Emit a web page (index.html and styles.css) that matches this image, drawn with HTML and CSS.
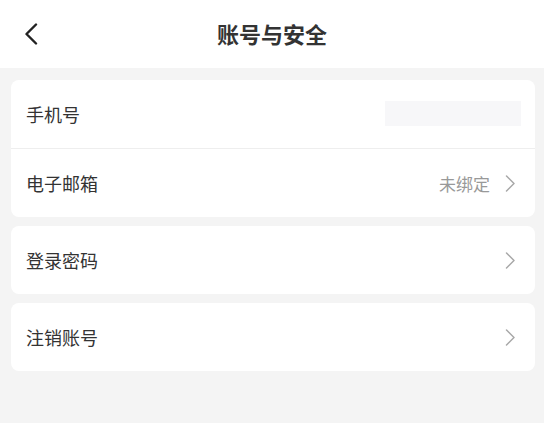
FILE: index.html
```html
<!DOCTYPE html>
<html lang="zh-CN">
<head>
<meta charset="utf-8">
<title>账号与安全</title>
<link rel="stylesheet" href="styles.css">
</head>
<body>
<div class="page">
  <header class="nav">
    <span class="back">
      <svg width="14" height="22" viewBox="0 0 14 22"><path d="M12 1.5 L2.5 11 L12 20.5" fill="none" stroke="#222" stroke-width="2.4" stroke-linecap="round" stroke-linejoin="round"/></svg>
    </span>
    <h1 class="title">账号与安全</h1>
  </header>
  <main class="content">
    <section class="card">
      <div class="row">
        <span class="label">手机号</span>
        <span class="masked"></span>
      </div>
      <div class="divider"></div>
      <div class="row">
        <span class="label">电子邮箱</span>
        <span class="value">未绑定</span>
        <svg class="arrow" width="11" height="17" viewBox="0 0 11 17"><path d="M1.5 1 L9 8.5 L1.5 16" fill="none" stroke="#a8a8a8" stroke-width="1.5" stroke-linecap="round" stroke-linejoin="round"/></svg>
      </div>
    </section>
    <section class="card">
      <div class="row">
        <span class="label">登录密码</span>
        <svg class="arrow" width="11" height="17" viewBox="0 0 11 17"><path d="M1.5 1 L9 8.5 L1.5 16" fill="none" stroke="#a8a8a8" stroke-width="1.5" stroke-linecap="round" stroke-linejoin="round"/></svg>
      </div>
    </section>
    <section class="card">
      <div class="row">
        <span class="label">注销账号</span>
        <svg class="arrow" width="11" height="17" viewBox="0 0 11 17"><path d="M1.5 1 L9 8.5 L1.5 16" fill="none" stroke="#a8a8a8" stroke-width="1.5" stroke-linecap="round" stroke-linejoin="round"/></svg>
      </div>
    </section>
  </main>
</div>
</body>
</html>
```
FILE: styles.css
```css
html, body {
  margin: 0;
  padding: 0;
  background: #f4f4f4;
  font-family: "Noto Sans CJK SC", "Noto Sans", sans-serif;
}
.page {
  width: 544px;
  min-height: 423px;
  background: #f4f4f4;
}
.nav {
  height: 68px;
  background: #ffffff;
  display: flex;
  align-items: center;
  justify-content: center;
  position: relative;
}
.back {
  position: absolute;
  left: 24px;
  top: 23px;
  display: flex;
}
.title {
  margin: 0;
  font-size: 22px;
  font-weight: 700;
  color: #333333;
  line-height: 1;
  padding-bottom: 3px;
}
.content {
  padding: 12px 9px 0 11px;
  display: flex;
  flex-direction: column;
  gap: 9px;
}
.card {
  background: #ffffff;
  border-radius: 8px;
  overflow: hidden;
}
.row {
  height: 68px;
  display: flex;
  align-items: center;
  padding: 0 19px 0 15px;
}
.label {
  flex: 1;
  font-size: 18px;
  color: #333333;
  line-height: 1;
}
.masked {
  width: 136px;
  height: 25px;
  background: #f7f7f9;
  margin-right: -5px;
  margin-top: -2px;
}
.value {
  font-size: 17px;
  color: #999999;
  line-height: 1;
  margin-right: 15px;
}
.arrow {
  display: block;
}
.divider {
  height: 1px;
  background: #eeeeee;
}
```
